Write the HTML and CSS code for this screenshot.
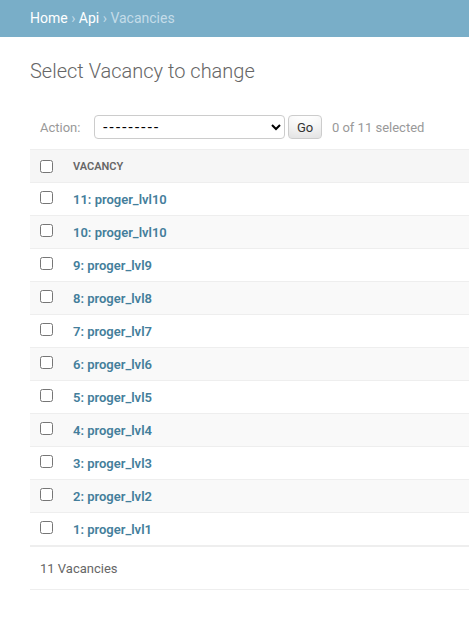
FILE: index.html
```html
<!DOCTYPE html>
<html lang="en">
<head>
<meta charset="utf-8">
<title>Select Vacancy to change</title>
<link rel="stylesheet" href="styles.css">
</head>
<body>
<div class="breadcrumbs"><a href="#">Home</a> › <a href="#">Api</a> › Vacancies</div>
<div class="content">
  <h1 class="title">Select Vacancy to change</h1>
  <div class="actions">
    <label class="action-label">Action: <select class="action-select"><option>---------</option><option>Delete selected vacancies</option></select></label> <button class="go-button" type="button">Go</button> <span class="action-counter">0 of 11 selected</span>
  </div>
  <table class="result-list">
    <thead>
      <tr>
        <th class="check-col"><input type="checkbox" class="cb"></th>
        <th class="name-col">Vacancy</th>
      </tr>
    </thead>
    <tbody>
      <tr><td class="check-col"><input type="checkbox" class="cb"></td><th class="name-cell"><a href="#">11: proger_lvl10</a></th></tr>
      <tr><td class="check-col"><input type="checkbox" class="cb"></td><th class="name-cell"><a href="#">10: proger_lvl10</a></th></tr>
      <tr><td class="check-col"><input type="checkbox" class="cb"></td><th class="name-cell"><a href="#">9: proger_lvl9</a></th></tr>
      <tr><td class="check-col"><input type="checkbox" class="cb"></td><th class="name-cell"><a href="#">8: proger_lvl8</a></th></tr>
      <tr><td class="check-col"><input type="checkbox" class="cb"></td><th class="name-cell"><a href="#">7: proger_lvl7</a></th></tr>
      <tr><td class="check-col"><input type="checkbox" class="cb"></td><th class="name-cell"><a href="#">6: proger_lvl6</a></th></tr>
      <tr><td class="check-col"><input type="checkbox" class="cb"></td><th class="name-cell"><a href="#">5: proger_lvl5</a></th></tr>
      <tr><td class="check-col"><input type="checkbox" class="cb"></td><th class="name-cell"><a href="#">4: proger_lvl4</a></th></tr>
      <tr><td class="check-col"><input type="checkbox" class="cb"></td><th class="name-cell"><a href="#">3: proger_lvl3</a></th></tr>
      <tr><td class="check-col"><input type="checkbox" class="cb"></td><th class="name-cell"><a href="#">2: proger_lvl2</a></th></tr>
      <tr><td class="check-col"><input type="checkbox" class="cb"></td><th class="name-cell"><a href="#">1: proger_lvl1</a></th></tr>
    </tbody>
  </table>
  <p class="paginator">11 Vacancies</p>
</div>
</body>
</html>
```
FILE: styles.css
```css
html, body {
  margin: 0;
  padding: 0;
}
body {
  font-family: Roboto, "Liberation Sans", sans-serif;
  font-size: 14px;
  color: #333;
  background: #fff;
}
a {
  text-decoration: none;
}
.breadcrumbs {
  background: #79aec8;
  color: #c4dce8;
  padding: 10px 30px;
  font-size: 14px;
  line-height: 17px;
}
.breadcrumbs a {
  color: #fff;
}
.content {
  padding: 22px 0 20px 30px;
}
.title {
  margin: 0 0 22px;
  font-size: 20px;
  font-weight: 300;
  line-height: 24px;
  color: #666;
}
.actions {
  padding: 10px 10px 8px;
  line-height: 26px;
  color: #999;
  font-size: 13px;
  white-space: nowrap;
}
.action-select {
  vertical-align: top;
  width: 191px;
  height: 24px;
  margin: 0 0 0 10px;
  padding: 0 0 0 4px;
  font-family: "DejaVu Sans", sans-serif;
  font-size: 14px;
  letter-spacing: 1.3px;
  color: #000;
  background: #fff;
  border: 1px solid #ccc;
  border-radius: 4px;
}
.go-button {
  vertical-align: top;
  height: 24px;
  margin: 0;
  padding: 4px 8px;
  font-family: Roboto, "Liberation Sans", sans-serif;
  font-size: 13px;
  line-height: 1;
  color: #333;
  background: #fff;
  border: 1px solid #ccc;
  border-radius: 4px;
  box-shadow: 0 -15px 20px -10px rgba(0, 0, 0, 0.15) inset;
}
.action-counter {
  margin: 0 0.5em;
  color: #999;
}
.result-list {
  width: 100%;
  border-collapse: collapse;
  font-size: 13px;
  line-height: 16px;
}
.result-list thead th {
  background: #f6f6f6;
  border-top: 1px solid #eee;
  border-bottom: 1px solid #eee;
  text-align: left;
  padding: 9px 8px 7px;
  font-size: 11px;
  font-weight: 600;
  text-transform: uppercase;
  color: #666;
}
.result-list tbody td,
.result-list tbody th {
  border-bottom: 1px solid #eee;
  padding: 9px 8px 7px;
  text-align: left;
  vertical-align: top;
}
.result-list tbody tr:nth-child(even) {
  background: #f9f9f9;
}
.result-list .check-col {
  width: 13px;
  padding: 8px 12px 8px 10px;
}
.cb {
  display: block;
  width: 13px;
  height: 13px;
  margin: 0;
}
.name-cell {
  font-weight: 600;
}
.name-cell a {
  color: #447e9b;
}
.paginator {
  margin: 0;
  padding: 11px 10px 9px;
  font-size: 13px;
  line-height: 22px;
  color: #666;
  border-top: 1px solid #eee;
  border-bottom: 1px solid #eee;
}
```
